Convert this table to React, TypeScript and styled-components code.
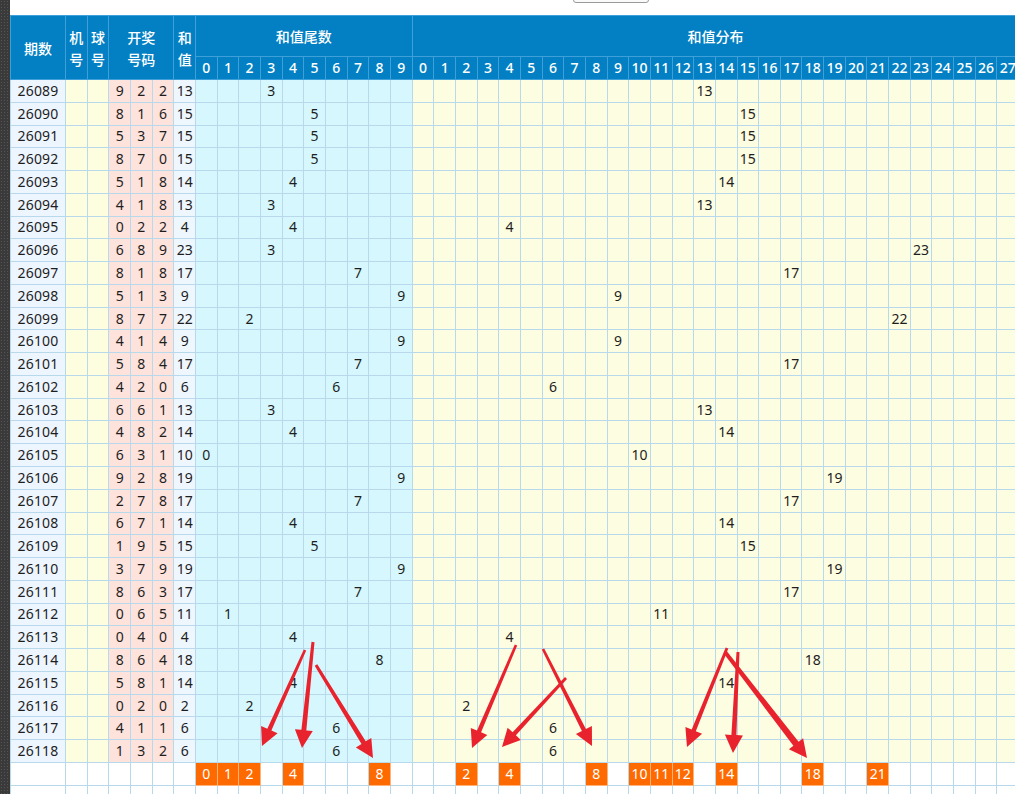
import React from 'react';
import styled, { createGlobalStyle } from 'styled-components';

const GlobalStyle = createGlobalStyle`
  html, body {
    margin: 0;
    padding: 0;
    background: #fff;
    overflow: hidden;
  }
  body {
    font-family: "Noto Sans", "Noto Sans CJK SC", sans-serif;
  }
`;

const draws: [string, string][] = [
  ['26089', '922'], ['26090', '816'], ['26091', '537'], ['26092', '870'],
  ['26093', '518'], ['26094', '418'], ['26095', '022'], ['26096', '689'],
  ['26097', '818'], ['26098', '513'], ['26099', '877'], ['26100', '414'],
  ['26101', '584'], ['26102', '420'], ['26103', '661'], ['26104', '482'],
  ['26105', '631'], ['26106', '928'], ['26107', '278'], ['26108', '671'],
  ['26109', '195'], ['26110', '379'], ['26111', '863'], ['26112', '065'],
  ['26113', '040'], ['26114', '864'], ['26115', '581'], ['26116', '020'],
  ['26117', '411'], ['26118', '132'],
];

const tailHits = [0, 1, 2, 4, 8];
const sumHits = [2, 4, 8, 10, 11, 12, 14, 18, 21];

const COL = 21.66;
const range = (n: number) => Array.from({ length: n }, (_, i) => i);

const Page = styled.div`
  position: relative;
  display: flex;
  width: 1015px;
  height: 794px;
  overflow: hidden;
`;

const SideStrip = styled.div`
  flex: 0 0 10px;
  background-color: #3a3a3a;
  background-image: radial-gradient(#555 0.8px, transparent 0.9px);
  background-size: 3px 3px;
`;

const Main = styled.div`
  flex: 1;
  min-width: 0;
  display: flex;
  flex-direction: column;
`;

const TopBar = styled.div`
  flex: 0 0 15px;
  box-sizing: border-box;
  height: 15px;
  padding: 0 0 12px 563px;
  display: flex;
  align-items: flex-end;
  overflow: hidden;
  background: #fff;
`;

const GhostButton = styled.button`
  flex: 0 0 76px;
  height: 24px;
  border: 1px solid #9a9a9a;
  border-radius: 3px;
  background: #fafafa;
`;

const Table = styled.table`
  flex-shrink: 0;
  border-collapse: collapse;
  table-layout: fixed;
  width: ${55 + COL * 44}px;
  border-top: 1px solid #9fd2ef;
  font-size: 14px;
  color: #1e1e1e;
`;

const Head = styled.th<{ $sub?: boolean }>`
  background: #0380c3;
  color: #fff;
  font-weight: 500;
  font-size: 14px;
  line-height: 22px;
  padding: 0;
  text-align: center;
  border: 1px solid #3f9fd8;
  height: ${(p) => (p.$sub ? '22px' : '40px')};
  white-space: pre-line;
  font-family: ${(p) => (p.$sub ? '"Noto Sans", sans-serif' : '"Noto Sans CJK SC", "Noto Sans", sans-serif')};
`;

type Zone = 'issue' | 'machine' | 'draw' | 'sum' | 'tail' | 'dist' | 'blank';

const zoneBg: Record<Zone, string> = {
  issue: '#edf5fe',
  machine: '#fdfde0',
  draw: '#fde3dc',
  sum: '#eef6fe',
  tail: '#d5f7fd',
  dist: '#fdfde1',
  blank: '#ffffff',
};

const Cell = styled.td<{ $zone: Zone; $hit?: boolean }>`
  background: ${(p) => (p.$hit ? '#ff6a00' : zoneBg[p.$zone])};
  color: ${(p) => (p.$hit ? '#fff' : '#1e1e1e')};
  border: 1px solid ${(p) => (p.$hit ? '#ffb27a' : '#b8d9ec')};
  height: 21.78px;
  padding: 0;
  text-align: center;
  line-height: 20px;
  white-space: nowrap;
  overflow: visible;
  letter-spacing: ${(p) => (p.$zone === 'issue' ? '0.2px' : '0')};
`;

const Overlay = styled.svg`
  position: absolute;
  left: 0;
  top: 0;
  pointer-events: none;
`;

type Arrow = [number, number, number, number, number];

const arrows: Arrow[] = [
  [305, 650, 262, 746, 4.5],
  [313, 642, 302, 748, 5],
  [316, 665, 373, 758, 5],
  [516, 645, 472, 748, 4.5],
  [566, 678, 502, 747, 4.5],
  [543, 649, 592, 746, 4.5],
  [727, 648, 687, 747, 4.5],
  [738, 652, 733, 753, 5],
  [725, 652, 807, 758, 6.5],
];

const arrowPoints = ([x1, y1, x2, y2, w]: Arrow) => {
  const dx = x2 - x1;
  const dy = y2 - y1;
  const len = Math.hypot(dx, dy);
  const ux = dx / len;
  const uy = dy / len;
  const px = -uy;
  const py = ux;
  const head = 18;
  const hw = 18;
  const bx = x2 - ux * head;
  const by = y2 - uy * head;
  const ws = w * 0.6;
  const pts = [
    [x1 + (px * ws) / 2, y1 + (py * ws) / 2],
    [bx + (px * w) / 2, by + (py * w) / 2],
    [bx + (px * hw) / 2, by + (py * hw) / 2],
    [x2, y2],
    [bx - (px * hw) / 2, by - (py * hw) / 2],
    [bx - (px * w) / 2, by - (py * w) / 2],
    [x1 - (px * ws) / 2, y1 - (py * ws) / 2],
  ];
  return pts.map((p) => p.map((v) => v.toFixed(1)).join(',')).join(' ');
};

const App: React.FC = () => (
  <>
    <GlobalStyle />
    <Page>
      <SideStrip />
      <Main>
        <TopBar>
          <GhostButton />
        </TopBar>
        <Table>
          <colgroup>
            <col style={{ width: 55 }} />
            {range(44).map((i) => (
              <col key={i} style={{ width: COL }} />
            ))}
          </colgroup>
          <thead>
            <tr>
              <Head rowSpan={2}>期数</Head>
              <Head rowSpan={2}>{'机\n号'}</Head>
              <Head rowSpan={2}>{'球\n号'}</Head>
              <Head rowSpan={2} colSpan={3}>{'开奖\n号码'}</Head>
              <Head rowSpan={2}>{'和\n值'}</Head>
              <Head colSpan={10}>和值尾数</Head>
              <Head colSpan={28}>和值分布</Head>
            </tr>
            <tr>
              {range(10).map((i) => (
                <Head $sub key={`t${i}`}>{i}</Head>
              ))}
              {range(28).map((i) => (
                <Head $sub key={`d${i}`}>{i}</Head>
              ))}
            </tr>
          </thead>
          <tbody>
            {draws.map(([issue, nums]) => {
              const digits = nums.split('').map(Number);
              const sum = digits.reduce((a, b) => a + b, 0);
              return (
                <tr key={issue}>
                  <Cell $zone="issue">{issue}</Cell>
                  <Cell $zone="machine" />
                  <Cell $zone="machine" />
                  {digits.map((d, i) => (
                    <Cell $zone="draw" key={i}>{d}</Cell>
                  ))}
                  <Cell $zone="sum">{sum}</Cell>
                  {range(10).map((i) => (
                    <Cell $zone="tail" key={`t${i}`}>{sum % 10 === i ? i : ''}</Cell>
                  ))}
                  {range(28).map((i) => (
                    <Cell $zone="dist" key={`d${i}`}>{sum === i ? i : ''}</Cell>
                  ))}
                </tr>
              );
            })}
            <tr>
              {range(7).map((i) => (
                <Cell $zone="blank" key={`b${i}`} />
              ))}
              {range(10).map((i) => {
                const hit = tailHits.includes(i);
                return (
                  <Cell $zone="blank" $hit={hit} key={`t${i}`}>{hit ? i : ''}</Cell>
                );
              })}
              {range(28).map((i) => {
                const hit = sumHits.includes(i);
                return (
                  <Cell $zone="blank" $hit={hit} key={`d${i}`}>{hit ? i : ''}</Cell>
                );
              })}
            </tr>
            <tr>
              {range(45).map((i) => (
                <Cell $zone="blank" key={`e${i}`} />
              ))}
            </tr>
          </tbody>
        </Table>
      </Main>
      <Overlay width={1015} height={794} viewBox="0 0 1015 794">
        {arrows.map((a, i) => (
          <polygon key={i} points={arrowPoints(a)} fill="#e8232d" />
        ))}
      </Overlay>
    </Page>
  </>
);

export default App;
